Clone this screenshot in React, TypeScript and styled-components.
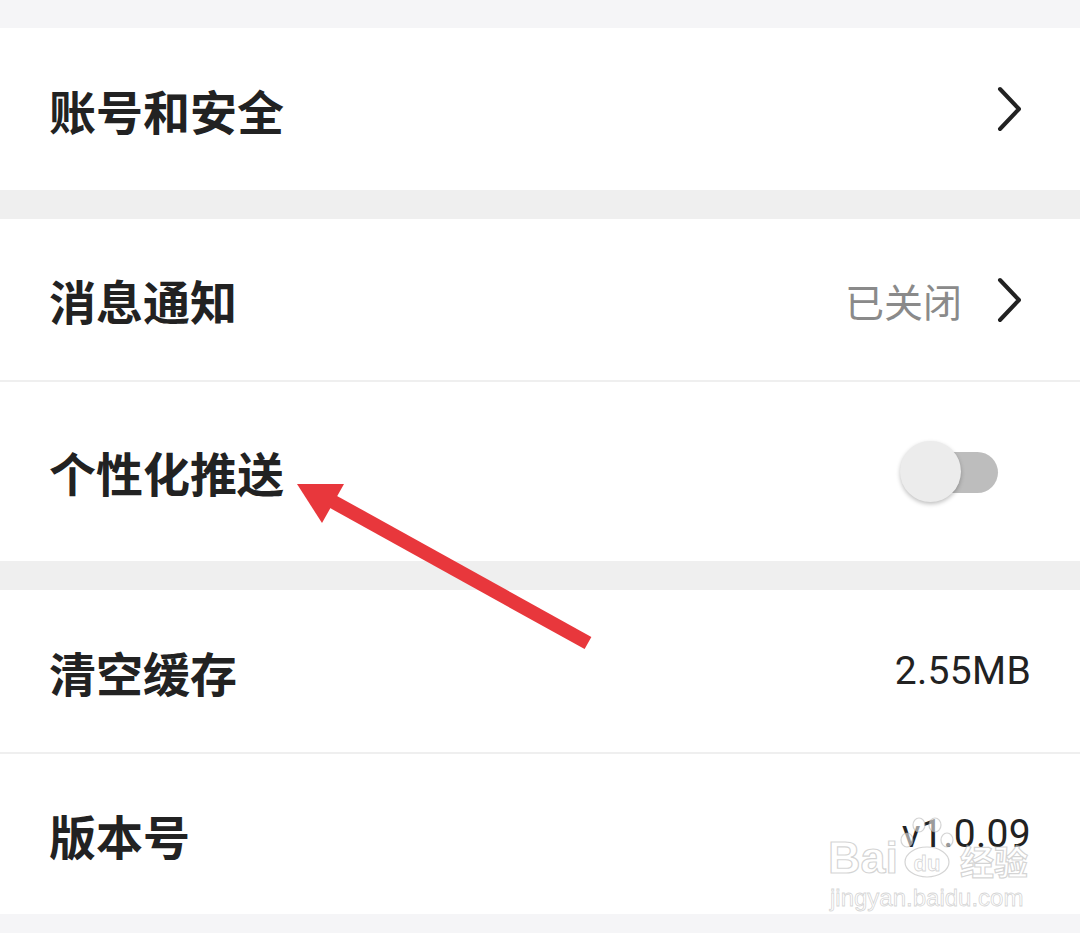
import styled, { createGlobalStyle } from "styled-components";

const GlobalStyle = createGlobalStyle`
    html, body {
        margin: 0;
        padding: 0;
        background: #f4f4f6;
    }
    * {
        box-sizing: border-box;
    }
`;

const Page = styled.div`
    position: relative;
    width: 1080px;
    height: 933px;
    overflow: hidden;
    background: #f5f5f7;
    padding-top: 28px;
    display: flex;
    flex-direction: column;
    font-family: "Noto Sans CJK SC", "Noto Sans", sans-serif;
`;

const Group = styled.div`
    background: #ffffff;
    display: flex;
    flex-direction: column;
`;

const Gap = styled.div<{ h: number }>`
    height: ${(p) => p.h}px;
    background: #efefef;
`;

const Row = styled.div<{ h: number }>`
    height: ${(p) => p.h}px;
    display: flex;
    align-items: center;
    justify-content: space-between;
    padding: 0 49px 0 49px;
`;

const Divider = styled.div`
    height: 2px;
    background: #efefef;
`;

const Label = styled.span`
    font-size: 47px;
    font-weight: 700;
    color: #222222;
`;

const Right = styled.div`
    display: flex;
    align-items: center;
    gap: 34px;
`;

const Status = styled.span`
    font-size: 39px;
    color: #8a8a8a;
    font-weight: 400;
`;

const Value = styled.span`
    font-family: Roboto, "Noto Sans", sans-serif;
    font-size: 39px;
    color: #222222;
    letter-spacing: 0.3px;
`;

const Chevron = styled.svg`
    width: 28px;
    height: 48px;
    margin-right: 7px;
`;

const Switch = styled.div`
    position: relative;
    width: 98px;
    height: 62px;
    margin-right: 33px;
`;

const Track = styled.div`
    position: absolute;
    right: 0;
    top: 11px;
    width: 70px;
    height: 41px;
    border-radius: 21px;
    background: #bdbdbd;
`;

const Thumb = styled.div`
    position: absolute;
    left: 0;
    top: 0;
    width: 61px;
    height: 61px;
    border-radius: 50%;
    background: #ececec;
    box-shadow: 0 2px 4px rgba(0, 0, 0, 0.25);
`;

const Arrow = styled.svg`
    position: absolute;
    left: 0;
    top: 0;
    pointer-events: none;
`;

const Watermark = styled.div`
    position: absolute;
    left: 828px;
    top: 816px;
    width: 200px;
    display: flex;
    flex-direction: column;
    align-items: flex-start;
    pointer-events: none;
`;

const MarkTop = styled.div`
    display: flex;
    align-items: flex-end;
    font-family: "Liberation Sans", sans-serif;
    font-size: 45px;
    font-weight: 700;
    color: rgba(255, 255, 255, 0.55);
    -webkit-text-stroke: 1.2px rgba(170, 170, 170, 0.5);
    line-height: 1;
`;

const MarkCn = styled.span`
    font-family: "Noto Sans CJK SC", sans-serif;
    font-size: 34px;
    margin-left: 4px;
    margin-bottom: 2px;
`;

const MarkUrl = styled.div`
    font-family: "Liberation Sans", sans-serif;
    font-size: 24px;
    line-height: 1;
    color: rgba(255, 255, 255, 0.55);
    -webkit-text-stroke: 0.8px rgba(170, 170, 170, 0.5);
    margin-top: 6px;
    margin-left: 2px;
`;

function ChevronIcon() {
    return (
        <Chevron viewBox="0 0 28 48">
            <path
                d="M4 4 L23 24 L4 44"
                fill="none"
                stroke="#222"
                strokeWidth="4"
                strokeLinecap="round"
                strokeLinejoin="round"
            />
        </Chevron>
    );
}

export default function App() {
    return (
        <>
            <GlobalStyle />
            <Page>
                <Group>
                    <Row h={162}>
                        <Label>账号和安全</Label>
                        <ChevronIcon />
                    </Row>
                </Group>
                <Gap h={29} />
                <Group>
                    <Row h={161}>
                        <Label>消息通知</Label>
                        <Right>
                            <Status>已关闭</Status>
                            <ChevronIcon />
                        </Right>
                    </Row>
                    <Divider />
                    <Row h={179}>
                        <Label>个性化推送</Label>
                        <Switch>
                            <Track />
                            <Thumb />
                        </Switch>
                    </Row>
                </Group>
                <Gap h={29} />
                <Group>
                    <Row h={162}>
                        <Label>清空缓存</Label>
                        <Value>2.55MB</Value>
                    </Row>
                    <Divider />
                    <Row h={160}>
                        <Label>版本号</Label>
                        <Value>v1.0.09</Value>
                    </Row>
                </Group>

                <Watermark>
                    <MarkTop>
                        Bai
                        <svg width="58" height="64" viewBox="0 0 58 64">
                            <g fill="rgba(255,255,255,0.55)" stroke="rgba(170,170,170,0.5)" strokeWidth="1.2">
                                <ellipse cx="29" cy="46" rx="22" ry="15" />
                                <ellipse cx="9" cy="24" rx="6" ry="7" />
                                <ellipse cx="21" cy="9" rx="6" ry="7" />
                                <ellipse cx="37" cy="9" rx="6" ry="7" />
                                <ellipse cx="49" cy="24" rx="6" ry="7" />
                            </g>
                            <text
                                x="29"
                                y="55"
                                textAnchor="middle"
                                fontFamily="Liberation Sans, sans-serif"
                                fontSize="22"
                                fontWeight="700"
                                fill="rgba(255,255,255,0.6)"
                                stroke="rgba(170,170,170,0.5)"
                                strokeWidth="0.8"
                            >
                                du
                            </text>
                        </svg>
                        <MarkCn>经验</MarkCn>
                    </MarkTop>
                    <MarkUrl>jingyan.baidu.com</MarkUrl>
                </Watermark>

                <Arrow width="1080" height="933" viewBox="0 0 1080 933">
                    <line
                        x1="588"
                        y1="643"
                        x2="330"
                        y2="500"
                        stroke="#e8373c"
                        strokeWidth="14"
                    />
                    <polygon points="297,484 344,484 322,523" fill="#e8373c" />
                </Arrow>
            </Page>
        </>
    );
}
